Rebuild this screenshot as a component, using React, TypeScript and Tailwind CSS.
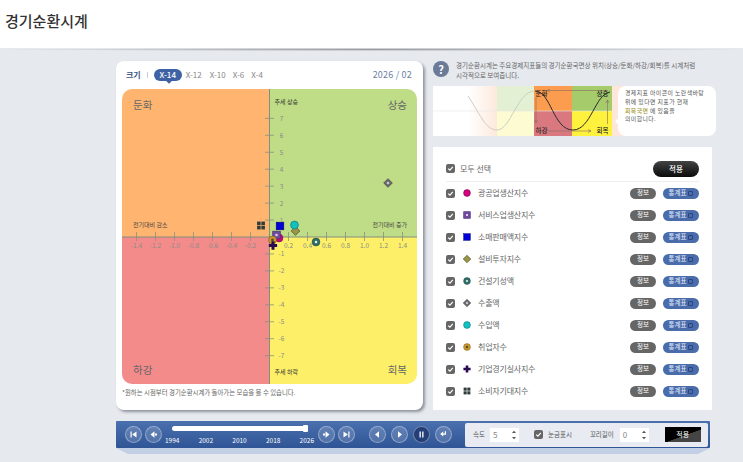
// 경기순환시계 화면
const INDICATORS = [
  { kind: 'circle', label: '광공업생산지수' },
  { kind: 'purple', label: '서비스업생산지수' },
  { kind: 'blue', label: '소매판매액지수' },
  { kind: 'olive', label: '설비투자지수' },
  { kind: 'ring', label: '건설기성액' },
  { kind: 'diamond', label: '수출액' },
  { kind: 'teal', label: '수입액' },
  { kind: 'gold', label: '취업자수' },
  { kind: 'plus', label: '기업경기실사지수' },
  { kind: 'grid', label: '소비자기대지수' },
]

/* 차트 원점 기준 좌표 (122, 89) */
const POINTS = [
  { kind: 'diamond', x: 266, y: 94 },
  { kind: 'grid', x: 139, y: 136.5 },
  { kind: 'blue', x: 158, y: 137 },
  { kind: 'olive', x: 173.5, y: 142 },
  { kind: 'teal', x: 172.5, y: 136 },
  { kind: 'ring', x: 194, y: 153 },
  { kind: 'circle', x: 157, y: 149 },
  { kind: 'purple', x: 154.5, y: 146 },
  { kind: 'gold', x: 150.5, y: 151 },
  { kind: 'plus', x: 151, y: 156.5 },
]

const X_TICKS = [-1.4, -1.2, -1.0, -0.8, -0.6, -0.4, -0.2, 0.2, 0.4, 0.6, 0.8, 1.0, 1.2, 1.4]
const Y_TICKS = [7, 6, 5, 4, 3, 2, 1, -1, -2, -3, -4, -5, -6, -7]

function Marker({ kind, x = 0, y = 0, scale = 1 }: { kind: string; x?: number; y?: number; scale?: number }) {
  let shape = <circle r="3.4" fill="#d6007f" stroke="#7a1050" strokeWidth="0.6" />
  if (kind === 'purple') {
    shape = (
      <g>
        <rect x="-3.3" y="-3.3" width="6.6" height="6.6" fill="#6d4a9c" stroke="#4b2f78" strokeWidth="0.6" />
        <rect x="-1" y="-1" width="2" height="2" fill="#e7c7ee" />
      </g>
    )
  }
  if (kind === 'blue') shape = <rect x="-3.3" y="-3.3" width="6.6" height="6.6" fill="#0000d8" stroke="#00007a" strokeWidth="0.5" />
  if (kind === 'olive') shape = <path d="M0-3.8 3.8 0 0 3.8-3.8 0Z" fill="#98944a" stroke="#4f4d1f" strokeWidth="0.6" />
  if (kind === 'ring') {
    shape = (
      <g>
        <circle r="3.4" fill="#2f6f68" stroke="#1e4a46" strokeWidth="0.5" />
        <circle r="1.1" fill="#e8f2ee" />
      </g>
    )
  }
  if (kind === 'diamond') {
    shape = (
      <g>
        <path d="M0-3.8 3.8 0 0 3.8-3.8 0Z" fill="#6a6a6c" stroke="#3a3a3a" strokeWidth="0.5" />
        <path d="M0-1.4 1.4 0 0 1.4-1.4 0Z" fill="#d0d0d0" />
      </g>
    )
  }
  if (kind === 'teal') shape = <circle r="3.4" fill="#12c0c0" stroke="#0a7a80" strokeWidth="0.6" />
  if (kind === 'gold') {
    shape = (
      <g>
        <circle r="3.4" fill="#c9982f" stroke="#7a5a18" strokeWidth="0.5" />
        <circle r="1.2" fill="#5c4a1c" />
      </g>
    )
  }
  if (kind === 'plus') shape = <path d="M-1.3-3.6h2.6v2.3h2.3v2.6H1.3v2.3h-2.6V1.3h-2.3v-2.6h2.3Z" fill="#2a0a52" />
  if (kind === 'grid') {
    shape = (
      <g fill="#2f3a3a">
        <rect x="-3.4" y="-3.4" width="3.1" height="3.1" />
        <rect x="0.3" y="-3.4" width="3.1" height="3.1" />
        <rect x="-3.4" y="0.3" width="3.1" height="3.1" />
        <rect x="0.3" y="0.3" width="3.1" height="3.1" />
      </g>
    )
  }
  return <g transform={`translate(${x} ${y}) scale(${scale})`}>{shape}</g>
}

function Check() {
  return (
    <span className="flex h-[9px] w-[9px] shrink-0 items-center justify-center rounded-[2px] bg-[#666]">
      <svg width="7" height="7" viewBox="0 0 7 7">
        <path d="M1.2 3.6 2.9 5.1 5.8 1.9" fill="none" stroke="#fff" strokeWidth="1.2" />
      </svg>
    </span>
  )
}

function Spinner() {
  return (
    <svg width="4" height="10" viewBox="0 0 4 10">
      <path d="M0 3 2 .8 4 3ZM0 7 2 9.2 4 7Z" fill="#555" />
    </svg>
  )
}

function RoundButton({ d, dark }: { d: string; dark?: boolean }) {
  return (
    <button
      className={`flex h-[17px] w-[17px] shrink-0 items-center justify-center rounded-full border border-white/35 ${
        dark ? 'bg-[#243f78]' : 'bg-white/15'
      }`}
    >
      <svg width="9" height="9" viewBox="0 0 9 9">
        <path d={d} fill="#fff" />
      </svg>
    </button>
  )
}

function ChartOverlay() {
  return (
    <svg className="absolute inset-0" width="295" height="295" viewBox="0 0 295 295">
      <line x1="147.5" y1="0" x2="147.5" y2="295" stroke="#7f8f80" strokeWidth="1" />
      <line x1="0" y1="148" x2="295" y2="148" stroke="#7f8f80" strokeWidth="1" />
      {X_TICKS.map(t => {
        const x = 147.5 + t * 95
        return (
          <g key={t}>
            <line x1={x} y1="143" x2={x} y2="152" stroke="#8a9080" strokeWidth="0.8" />
            <text x={x} y="158.5" textAnchor="middle" fontSize="6.5" fill="#8b8b86">
              {t.toFixed(1)}
            </text>
          </g>
        )
      })}
      {Y_TICKS.map(t => {
        const y = 148 - t * 16.95
        return (
          <g key={t}>
            <line x1="143" y1={y} x2="152" y2={y} stroke="#8a9080" strokeWidth="0.8" />
            <text x="159.5" y={y + 2.5} textAnchor="middle" fontSize="6.5" fill="#8b8b86">
              {t}
            </text>
          </g>
        )
      })}
      {POINTS.map(p => (
        <Marker key={p.kind} kind={p.kind} x={p.x} y={p.y} scale={1.15} />
      ))}
    </svg>
  )
}

function ClockCard() {
  return (
    <div className="h-[349px] w-[307px] shrink-0 rounded-[8px] bg-white px-[6px] shadow-[2px_2px_3px_rgba(70,75,90,0.55)]">
      {/* 크기 선택 */}
      <div className="flex h-[28px] items-center pl-[4px] pr-[5px] text-[8px] text-[#888]">
        <span className="font-bold text-[#3c5580]">크기</span>
        <span className="ml-[6px] h-[6px] w-px bg-[#ccc]" />
        <span className="relative ml-[6px] flex h-[12px] w-[28px] items-center justify-center rounded-full bg-[#3f62a5] font-medium text-white">
          X-14
          <span className="absolute bottom-[-2px] left-[13px] h-[4px] w-[4px] rotate-45 bg-[#3f62a5]" />
        </span>
        <span className="ml-[4px]">X-12</span>
        <span className="ml-[8px]">X-10</span>
        <span className="ml-[7px]">X-6</span>
        <span className="ml-[7px]">X-4</span>
        <span className="ml-auto text-[9px] tracking-[0.2px] text-[#6b7fa3]">2026 / 02</span>
      </div>

      {/* 사분면 차트 */}
      <div className="relative grid h-[295px] w-[295px] grid-cols-[147.5px_147.5px] grid-rows-[148px_147px] overflow-hidden rounded-[10px] text-[#666]">
        <div className="flex flex-col justify-between bg-[#ffb570] pb-[8px] pl-[11px] pt-[7px]">
          <span className="text-[10.5px] leading-[17px]">둔화</span>
          <span className="text-[6px] leading-[9px] text-[#444]">전기대비 감소</span>
        </div>
        <div className="flex flex-col bg-[#bfdc87] pb-[8px] pr-[10px] pt-[7px]">
          <div className="flex items-start justify-between pl-[5px]">
            <span className="text-[6px] leading-[12px] text-[#333]">추세 상승</span>
            <span className="text-[10.5px] leading-[17px]">상승</span>
          </div>
          <span className="mt-auto self-end text-[6px] leading-[9px] text-[#444]">전기대비 증가</span>
        </div>
        <div className="flex items-end bg-[#f48b8b] pb-[6px] pl-[11px]">
          <span className="text-[10.5px] leading-[17px]">하강</span>
        </div>
        <div className="flex items-end justify-between bg-[#fdf068] pb-[6px] pl-[5px] pr-[10px]">
          <span className="text-[6px] leading-[12px] text-[#333]">추세 하락</span>
          <span className="text-[10.5px] leading-[17px]">회복</span>
        </div>
        <ChartOverlay />
      </div>

      <p className="mt-[4px] text-[6.4px] leading-[10px] text-[#666]">
        *원하는 시점부터 경기순환시계가 돌아가는 모습을 볼 수 있습니다.
      </p>
    </div>
  )
}

function Diagram() {
  return (
    <div className="relative mt-[8px] h-[50px] w-[283px]">
      <svg className="absolute inset-0" width="283" height="50" viewBox="0 0 283 50">
        <defs>
          <linearGradient id="fadeLeft" x1="0" x2="1" y1="0" y2="0">
            <stop offset="0" stopColor="#ffffff" />
            <stop offset="0.55" stopColor="#ffffff" />
            <stop offset="1" stopColor="#fde9dd" />
          </linearGradient>
        </defs>
        <rect x="0" y="0" width="64" height="50" fill="url(#fadeLeft)" />
        <rect x="64" y="0" width="37" height="25" fill="#e4f0d4" />
        <rect x="64" y="25" width="37" height="25" fill="#fdfbd2" />
        <rect x="101" y="0" width="38" height="25" fill="#fb9c4e" />
        <rect x="139" y="0" width="40" height="25" fill="#a5cb6b" />
        <rect x="101" y="25" width="38" height="25" fill="#d9797f" />
        <rect x="139" y="25" width="40" height="25" fill="#fff23e" />
        <rect x="179" y="0" width="12" height="50" fill="#fde6da" />
        <line x1="0" y1="25" x2="179" y2="25" stroke="#e5e5e0" strokeWidth="0.6" />
        <path d="M35 10C46 26 52 44 64 44 78 44 84 5 102 5" fill="none" stroke="#c8c8c0" strokeWidth="0.9" />
        <path d="M102 5C118 5 120 44 140 44 158 44 162 8 177 6" fill="none" stroke="#2a2a2a" strokeWidth="1" />
        <g fill="none" stroke="#8a6a60" strokeWidth="0.6">
          <path d="M175 4.5H114M117 3 114 4.5 117 6" />
          <path d="M103 11V37M101.5 34 103 37 104.5 34" />
          <path d="M114 45H158M155 43.5 158 45 155 46.5" />
          <path d="M174.5 38V14M173 17 174.5 14 176 17" />
        </g>
        <g fontSize="6.5" fontWeight="500" fill="#222" textAnchor="middle">
          <text x="108.5" y="9.5">둔화</text>
          <text x="169.5" y="9.5">상승</text>
          <text x="108.5" y="47">하강</text>
          <text x="169.5" y="47">회복</text>
        </g>
      </svg>
      {/* 말풍선 */}
      <div className="absolute right-0 top-0 h-[50px] w-[98px] rounded-[8px] bg-white pl-[7px] pt-[3px] text-[5.9px] leading-[8.8px] tracking-[0.4px] text-[#555]">
        <span className="absolute left-[-2px] top-[33px] h-[5px] w-[5px] rotate-45 bg-white" />
        <p>경제지표 아이콘이 노란색바탕</p>
        <p>위에 있다면 지표가 현재</p>
        <p>
          <span className="font-medium text-[#a3962a]">회복국면</span> 에 있음을
        </p>
        <p>의미합니다.</p>
      </div>
    </div>
  )
}

function IndicatorPanel() {
  return (
    <div className="mt-[11px] h-[263px] w-[279px] bg-white px-[13px] pt-[12px]">
      <div className="flex h-[23px] items-center border-b border-[#eee] pb-[3px] text-[8px] text-[#666]">
        <Check />
        <span className="ml-[5px]">모두 선택</span>
        <button className="ml-auto flex h-[16px] w-[46px] items-center justify-center rounded-full bg-gradient-to-b from-[#444] to-[#0c0c0c] text-[7.5px] font-medium text-white">
          적용
        </button>
      </div>
      <ul>
        {INDICATORS.map(row => (
          <li key={row.label} className="flex h-[22px] items-center text-[8px] text-[#666]">
            <Check />
            <svg className="ml-[7px]" width="10" height="10" viewBox="-5 -5 10 10">
              <Marker kind={row.kind} />
            </svg>
            <span className="ml-[6px] tracking-[-0.2px]">{row.label}</span>
            <span className="ml-auto flex h-[11px] w-[26px] items-center justify-center rounded-full bg-[#666] text-[6.5px] text-white">
              정보
            </span>
            <span className="ml-[7px] flex h-[11px] w-[36px] items-center justify-center gap-[2px] rounded-full bg-[#4a6cab] text-[6.5px] text-[#e8eeff]">
              통계표
              <span className="h-[5px] w-[5px] rounded-[1px] border border-[#27467f]" />
            </span>
          </li>
        ))}
      </ul>
    </div>
  )
}

function PlayerBar() {
  return (
    <div className="ml-[116px] mt-[11px] w-[594px]">
      <div className="flex h-[27px] items-center rounded-[1px] bg-gradient-to-b from-[#4a70ae] to-[#2f5596] pl-[8.5px] pr-[2px]">
        <RoundButton d="M1.5 1.5h1.2v6H1.5ZM7.5 1.5v6L3.2 4.5Z" />
        <span className="ml-[3px]">
          <RoundButton d="M5.5 1.2v6.6L1.5 4.5ZM6 3.5h2v2H6Z" />
        </span>

        {/* 연도 슬라이더 */}
        <div className="relative ml-[3.5px] h-[27px] w-[149px] shrink-0">
          <span className="absolute left-[7px] top-[5px] h-[5px] w-[136px] rounded-full bg-white" />
          <span className="absolute left-[138px] top-[4px] h-[7px] w-[5px] rounded-[1px] bg-white" />
          <div className="absolute left-0 top-[14px] flex w-[149px] justify-between text-[6.5px] leading-[10px] text-white">
            <span>1994</span>
            <span>2002</span>
            <span>2010</span>
            <span>2018</span>
            <span>2026</span>
          </div>
        </div>

        <span className="ml-[3.5px]">
          <RoundButton d="M3.5 1.2v6.6L7.5 4.5ZM1 3.5h2v2H1Z" />
        </span>
        <span className="ml-[3px]">
          <RoundButton d="M1.5 1.5v6l4.3-3ZM6.3 1.5h1.2v6H6.3Z" />
        </span>
        <span className="ml-[14px]">
          <RoundButton d="M6 1.2v6.6L2 4.5Z" />
        </span>
        <span className="ml-[5px]">
          <RoundButton d="M3 1.2v6.6l4-3.3Z" />
        </span>
        <span className="ml-[5px]">
          <RoundButton dark d="M2.5 1.5h1.3v6H2.5ZM5.2 1.5h1.3v6H5.2Z" />
        </span>
        <span className="ml-[5px]">
          <RoundButton d="M7 1.2v3.6H4.2V6.6L1.2 4 4.2 1.6v1.9h1.6V1.2Z" />
        </span>

        {/* 재생 설정 */}
        <div className="ml-[13.5px] flex h-[24px] w-[243px] items-center rounded-[2px] bg-[#e8ebf2] pl-[8px] text-[6.5px] text-[#555]">
          <span>속도</span>
          <span className="ml-[5px] flex h-[14px] w-[29px] items-center justify-between bg-white pl-[3px] pr-[3px] text-[8px] text-[#888]">
            5
            <Spinner />
          </span>
          <span className="ml-[15px]">
            <Check />
          </span>
          <span className="ml-[5px]">눈금표시</span>
          <span className="ml-[18px]">꼬리길이</span>
          <span className="ml-[6px] flex h-[14px] w-[29px] items-center justify-between bg-white pl-[3px] pr-[3px] text-[8px] text-[#888]">
            0
            <Spinner />
          </span>
          <button className="ml-[16px] flex h-[15px] w-[36px] items-center justify-center bg-[linear-gradient(160deg,#000_55%,#444_56%)] text-[7px] text-white">
            적용
          </button>
        </div>
      </div>
      <div className="h-[6px] bg-[#c3cfe4] [clip-path:polygon(0_0,100%_0,98%_100%,2%_100%)]" />
    </div>
  )
}

export default function App() {
  return (
    <div className="h-[462px] w-[743px] overflow-hidden bg-[#e6e9ee] font-['Noto_Sans_CJK_KR','Noto_Sans',sans-serif]">
      <header className="flex h-[48px] items-center bg-white pb-[6px] pl-[5px] text-[15px] font-medium text-[#333]">
        경기순환시계
      </header>
      <div className="h-[3px] bg-[radial-gradient(closest-side,rgba(90,90,100,0.55),rgba(90,90,100,0))]" />

      <div className="ml-[116px] mt-[10px] flex gap-[10px]">
        <ClockCard />
        <div className="w-[283px]">
          <div className="flex h-[17px] items-start">
            <span className="flex h-[16px] w-[16px] shrink-0 items-center justify-center rounded-full bg-[#6b7a97] text-[11px] font-bold leading-none text-white">
              ?
            </span>
            <p className="ml-[7px] text-[6.5px] leading-[9.5px] text-[#666]">
              경기순환시계는 주요경제지표들의 경기순환국면상 위치(상승/둔화/하강/회복)를 시계처럼
              <br />
              시각적으로 보여줍니다.
            </p>
          </div>
          <Diagram />
          <IndicatorPanel />
        </div>
      </div>

      <PlayerBar />
    </div>
  )
}
